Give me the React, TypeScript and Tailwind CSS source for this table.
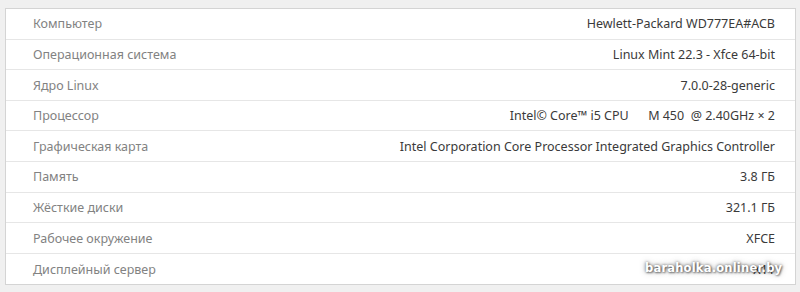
import React from "react";

const rows: [string, string][] = [
  ["Компьютер", "Hewlett-Packard WD777EA#ACB"],
  ["Операционная система", "Linux Mint 22.3 - Xfce 64-bit"],
  ["Ядро Linux", "7.0.0-28-generic"],
  ["Процессор", "Intel© Core™ i5 CPU      M 450  @ 2.40GHz × 2"],
  ["Графическая карта", "Intel Corporation Core Processor Integrated Graphics Controller"],
  ["Память", "3.8 ГБ"],
  ["Жёсткие диски", "321.1 ГБ"],
  ["Рабочее окружение", "XFCE"],
  ["Дисплейный сервер", "X11"],
];

export default function App() {
  return (
    <div
      className="w-[800px] h-[292px] bg-[#f0f0f0] pt-[8px] pl-[5px] pr-[4px] relative overflow-hidden"
      style={{ fontFamily: '"Noto Sans", "Open Sans", sans-serif' }}
    >
      <div className="bg-white border border-[#d4d4d4] flex flex-col">
        {rows.map(([k, v], i) => (
          <div
            key={k}
            className={`flex items-center justify-between h-[30.6px] pt-[2px] pl-[27px] pr-[20px] text-[12.5px] ${
              i < rows.length - 1 ? "border-b border-[#e6e6e6]" : ""
            }`}
          >
            <span className="text-[#828282]">{k}</span>
            <span className="text-[#3a3a3a] whitespace-pre">{v}</span>
          </div>
        ))}
      </div>
      <div
        className="absolute left-[645px] top-[260px] text-white font-bold text-[11.5px] tracking-[0.2px]"
        style={{
          textShadow:
            "0 0 3px rgba(0,0,0,0.55), 0 0 6px rgba(0,0,0,0.35), 1px 1px 2px rgba(0,0,0,0.4)",
          fontFamily: '"DejaVu Sans", sans-serif',
        }}
      >
        baraholka.onliner.by
      </div>
    </div>
  );
}
